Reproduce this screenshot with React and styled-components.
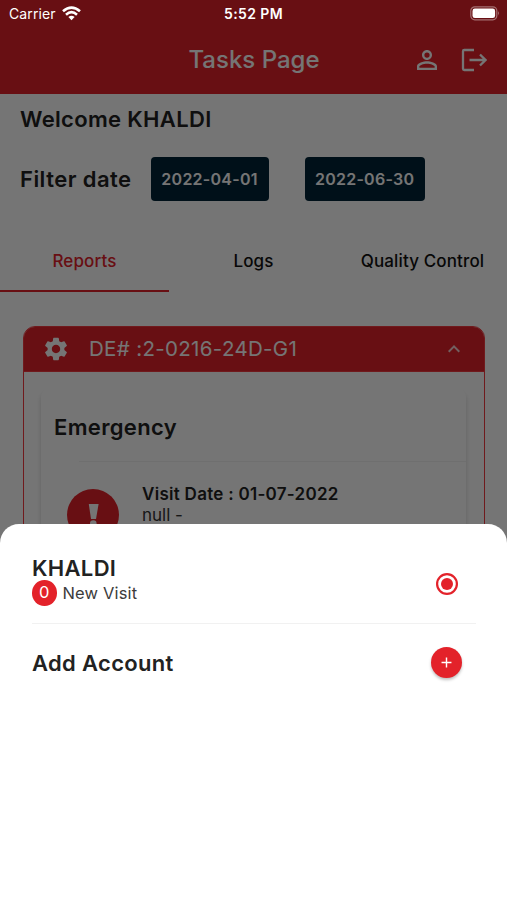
import React from 'react';
import styled, { createGlobalStyle } from 'styled-components';
import {
    MdOutlinePersonOutline,
    MdSettings,
    MdKeyboardArrowUp,
    MdAdd,
} from 'react-icons/md';

const GlobalStyle = createGlobalStyle`
    * {
        box-sizing: border-box;
    }
    body {
        margin: 0;
        background: white;
        font-family: Inter, "Liberation Sans", sans-serif;
        color: #222;
    }
`;

const Screen = styled.div`
    position: relative;
    width: 507px;
    height: 900px;
    overflow: hidden;
    background: white;
`;

const HeaderBlock = styled.header`
    height: 94px;
    padding: 25px 20.5px 0 0;
    background: #e3222a;
    color: white;
    display: grid;
    grid-template-columns: 1fr auto 1fr;
    align-items: center;
`;

const Title = styled.h1`
    grid-column: 2;
    margin: 1px 0 0 21.5px;
    font-size: 24px;
    font-weight: 500;
    line-height: 30px;
`;

const HeaderActions = styled.div`
    display: flex;
    align-items: center;
    justify-content: flex-end;
    gap: 19px;
`;

const Content = styled.main`
    display: flex;
    flex-direction: column;
`;

const Heading = styled.div`
    font-size: 22px;
    font-weight: 600;
    letter-spacing: ${(props) => props.$spacing || 0.33}px;
    line-height: 28px;
    white-space: nowrap;
`;

const Welcome = styled.div`
    padding: 11px 20px 0;
`;

const FilterRow = styled.div`
    display: flex;
    align-items: center;
    margin-top: 24px;
    padding-left: 20px;
    height: 44px;
`;

const DateButton = styled.button`
    width: ${(props) => props.$width}px;
    height: 44px;
    margin-left: ${(props) => props.$gap}px;
    padding: 0;
    border: none;
    border-radius: 4px;
    background: #022437;
    color: white;
    font-family: inherit;
    font-size: 16px;
    font-weight: 600;
    letter-spacing: 0.26px;
    white-space: nowrap;
`;

const Tabs = styled.nav`
    display: grid;
    grid-template-columns: repeat(3, 1fr);
    height: 61px;
    margin-top: 31px;
`;

const Tab = styled.div`
    display: flex;
    justify-content: center;
    height: 60px;
    padding-top: 17px;
    border-bottom: 2px solid ${(props) => (props.$active ? '#e3222a' : 'transparent')};
    color: ${(props) => (props.$active ? '#e3222a' : '#111')};
    font-size: 17px;
    font-weight: 500;
    letter-spacing: 0.13px;
    line-height: 24px;
    white-space: nowrap;
`;

const Report = styled.section`
    width: 462px;
    height: 300px;
    margin: 33px 0 0 23px;
    border: 1px solid #f5393f;
    border-radius: 12px 12px 0 0;
    overflow: hidden;
`;

const ReportHeader = styled.div`
    display: flex;
    align-items: center;
    height: 45px;
    padding: 0 18px;
    background: #e3222a;
    border-bottom: 1px solid #f5393f;
    color: white;
`;

const ReportTitle = styled.div`
    flex: 1;
    margin-left: 19px;
    font-size: 20.5px;
    letter-spacing: 0.33px;
    line-height: 26px;
`;

const Chevron = styled(MdKeyboardArrowUp)`
    opacity: 0.8;
`;

const VisitCard = styled.div`
    height: 300px;
    margin: 17px 18px 0 17px;
    border-radius: 8px;
    box-shadow: 0 4px 5px rgba(0, 0, 0, 0.16);
`;

const CardTitle = styled.div`
    padding: 24px 0 0 13px;
`;

const CardDivider = styled.div`
    height: 1px;
    margin: 20px 0 0 38px;
    background: #f1f1f1;
`;

const Visit = styled.div`
    display: flex;
    padding: 22px 0 0 26px;
    font-size: 17px;
    line-height: 21px;
`;

const VisitText = styled.div`
    margin-left: 23px;
    color: #333;
`;

const VisitDate = styled.div`
    color: #222;
    font-weight: 600;
    letter-spacing: 0.28px;
`;

const AlertCircle = styled.div`
    flex: none;
    width: 52px;
    height: 52px;
    margin-top: 5px;
    border-radius: 50%;
    background: #e3222a;
`;

const Scrim = styled.div`
    position: absolute;
    inset: 0;
    background: rgba(0, 0, 0, 0.54);
`;

// stays above the scrim, like the system bar does
const StatusBar = styled.div`
    position: absolute;
    top: 0;
    left: 0;
    right: 0;
    display: grid;
    grid-template-columns: 1fr auto 1fr;
    align-items: center;
    height: 27px;
    padding: 0 7px 0 9px;
    color: white;
    font-size: 14px;
    line-height: 20px;
`;

const Carrier = styled.div`
    display: flex;
    align-items: center;
    gap: 6px;
    letter-spacing: 0.1px;
`;

const Clock = styled.div`
    margin-right: 2px;
    font-weight: 600;
    font-size: 14px;
    letter-spacing: 0.4px;
`;

const Battery = styled.svg`
    justify-self: end;
`;

const Sheet = styled.div`
    position: absolute;
    left: 0;
    right: 0;
    bottom: 0;
    height: 376px;
    padding: 29px 31px 0 32px;
    border-radius: 19px 19px 0 0;
    background: white;
`;

const AccountRow = styled.div`
    display: flex;
    align-items: center;
    justify-content: space-between;
    height: ${(props) => props.$height}px;
    padding-right: 14px;
`;

const VisitCount = styled.div`
    display: flex;
    align-items: center;
    gap: 6px;
    margin-top: -2px;
    color: #3c3c3c;
    font-size: 16.5px;
    letter-spacing: 0.15px;
    line-height: 25px;
`;

const Badge = styled.span`
    width: 24.5px;
    height: 25.5px;
    border-radius: 50%;
    background: #e3222a;
    color: white;
    text-align: center;
`;

const SheetDivider = styled.div`
    height: 1px;
    margin-top: 16px;
    background: #f1f1f1;
`;

const AddButton = styled.button`
    display: flex;
    align-items: center;
    justify-content: center;
    width: 31px;
    height: 31px;
    padding: 0;
    border: none;
    border-radius: 50%;
    background: #e3222a;
    color: white;
    box-shadow: 0 2px 3px rgba(0, 0, 0, 0.25);
`;

const Radio = styled.svg`
    flex: none;
    margin: 7px 4px 0 0;
`;

const tabs = ['Reports', 'Logs', 'Quality Control'];

const LogoutIcon = () => (
    <svg width="26" height="24" viewBox="0 0 26 24" fill="none" stroke="currentColor" strokeWidth="2.3">
        <path d="M13 2H3.3Q2 2 2 3.3V20.7Q2 22 3.3 22H13" />
        <path d="M8.5 12H24.5M19 6.5L24.5 12L19 17.5" />
    </svg>
);

const WifiIcon = () => (
    <svg width="19" height="15" viewBox="0 0 19 15" fill="none" stroke="white" strokeWidth="2.6">
        <path d="M1 5.3Q9.5 -2.2 18 5.3" />
        <path d="M4 8.7Q9.5 3.7 15 8.7" />
        <path d="M9.5 14.2L6.4 11.1Q9.5 8.4 12.6 11.1Z" fill="white" stroke="none" />
    </svg>
);

const BatteryIcon = () => (
    <Battery width="31" height="15" viewBox="0 0 31 15">
        <rect x="1.8" y="0.8" width="26" height="13" rx="4" fill="none" stroke="white" strokeOpacity="0.4" strokeWidth="1.2" />
        <rect x="3.5" y="2.5" width="22.6" height="9.6" rx="2.4" fill="white" />
        <path d="M29.2 5Q31 7.3 29.2 9.6Z" fill="white" fillOpacity="0.5" />
    </Battery>
);

const ExclamationIcon = () => (
    <svg width="52" height="52" viewBox="0 0 52 52" fill="white">
        <path d="M21.8 15H31.6L29 30H24Z" />
        <circle cx="26.3" cy="34.5" r="3.3" />
    </svg>
);

const RadioIcon = () => (
    <Radio width="22" height="22" viewBox="0 0 22 22">
        <circle cx="11" cy="11" r="9.9" fill="none" stroke="#e3222a" strokeWidth="2.2" />
        <circle cx="11" cy="11" r="6" fill="#e3222a" />
    </Radio>
);

const App = () => {
    return (
        <>
            <GlobalStyle />
            <Screen>
                <HeaderBlock>
                    <Title>Tasks Page</Title>
                    <HeaderActions>
                        <MdOutlinePersonOutline size={30} />
                        <LogoutIcon />
                    </HeaderActions>
                </HeaderBlock>
                <Content>
                    <Welcome>
                        <Heading>Welcome KHALDI</Heading>
                    </Welcome>
                    <FilterRow>
                        <Heading $spacing={0.46}>Filter date</Heading>
                        <DateButton $width={118} $gap={19}>2022-04-01</DateButton>
                        <DateButton $width={120} $gap={36}>2022-06-30</DateButton>
                    </FilterRow>
                    <Tabs>
                        {tabs.map((tab, i) => (
                            <Tab key={tab} $active={i === 0}>{tab}</Tab>
                        ))}
                    </Tabs>
                    <Report>
                        <ReportHeader>
                            <MdSettings size={28} />
                            <ReportTitle>DE# :2-0216-24D-G1</ReportTitle>
                            <Chevron size={24} />
                        </ReportHeader>
                        <VisitCard>
                            <CardTitle>
                                <Heading>Emergency</Heading>
                            </CardTitle>
                            <CardDivider />
                            <Visit>
                                <AlertCircle>
                                    <ExclamationIcon />
                                </AlertCircle>
                                <VisitText>
                                    <VisitDate>Visit Date : 01-07-2022</VisitDate>
                                    <div>null -</div>
                                </VisitText>
                            </Visit>
                        </VisitCard>
                    </Report>
                </Content>
                <Scrim />
                <StatusBar>
                    <Carrier>
                        Carrier
                        <WifiIcon />
                    </Carrier>
                    <Clock>5:52 PM</Clock>
                    <BatteryIcon />
                </StatusBar>
                <Sheet>
                    <AccountRow $height={54}>
                        <div>
                            <Heading>KHALDI</Heading>
                            <VisitCount>
                                <Badge>0</Badge>
                                New Visit
                            </VisitCount>
                        </div>
                        <RadioIcon />
                    </AccountRow>
                    <SheetDivider />
                    <AccountRow $height={77}>
                        <Heading>Add Account</Heading>
                        <AddButton>
                            <MdAdd size={17} />
                        </AddButton>
                    </AccountRow>
                </Sheet>
            </Screen>
        </>
    );
};

export default App;
